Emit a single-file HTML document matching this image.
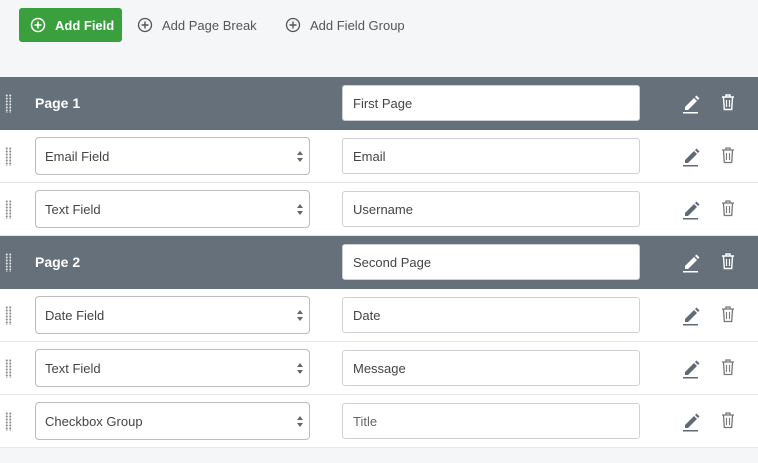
<!DOCTYPE html>
<html><head><style>
*{box-sizing:border-box;margin:0;padding:0}
body{width:758px;height:463px;background:#f5f6f8;font-family:"Liberation Sans",sans-serif;font-size:13px;color:#333;position:relative;overflow:hidden}
.btn{position:absolute;top:8px;height:34px;display:flex;align-items:center;font-size:13px;color:#555}
.green{left:19px;width:103px;background:#3a9f3d;border-radius:3px;color:#fff;font-weight:bold;padding-left:11px}
.btn svg{margin-right:9px}
.row{position:absolute;left:0;width:758px;height:53px;background:#fff;border-bottom:1px solid #e4e6e9}
.row.pg{background:#65707b;border-bottom:none}
.drag{position:absolute;left:5px;top:17px;width:7px;height:19px;background-image:radial-gradient(circle,#888 0.9px,transparent 1.1px);background-size:3.5px 3px}
.pg .drag{background-image:radial-gradient(circle,#dfe3e6 0.9px,transparent 1.1px)}
.title{position:absolute;left:35px;top:18px;color:#fff;font-weight:bold;font-size:14px}
.sel{position:absolute;left:35px;top:7px;width:275px;height:38px;border:1px solid #b9bdc2;border-radius:4px;padding:11px 9px;color:#444}
.sel:after{content:"";position:absolute;right:6px;top:13px;border:3px solid transparent;border-bottom:4px solid #666;border-top:0}
.sel:before{content:"";position:absolute;right:6px;top:20px;border:3px solid transparent;border-top:4px solid #666;border-bottom:0}
.inp{position:absolute;left:342px;top:8px;width:298px;height:36px;border:1px solid #cdd1d5;border-radius:3px;background:#fff;padding:10px 10px;color:#444}
.ic{position:absolute;left:681px;top:15px}
.tr{position:absolute;left:721px;top:17px}
</style></head><body>
<div class="btn green"><svg width="16" height="16" viewBox="0 0 16 16"><circle cx="8" cy="8" r="6.5" fill="none" stroke="#fff" stroke-width="1.5"/><path d="M8 4.5v7M4.5 8h7" stroke="#fff" stroke-width="1.6"/></svg>Add Field</div>
<div class="btn" style="left:137px"><svg width="16" height="16" viewBox="0 0 16 16"><circle cx="8" cy="8" r="6.5" fill="none" stroke="#555" stroke-width="1.3"/><path d="M8 4.5v7M4.5 8h7" stroke="#555" stroke-width="1.4"/></svg>Add Page Break</div>
<div class="btn" style="left:285px"><svg width="16" height="16" viewBox="0 0 16 16"><circle cx="8" cy="8" r="6.5" fill="none" stroke="#555" stroke-width="1.3"/><path d="M8 4.5v7M4.5 8h7" stroke="#555" stroke-width="1.4"/></svg>Add Field Group</div>

<div class="row pg" style="top:77px"><div class="drag"></div><div class="title">Page 1</div><div class="inp">First Page</div>
<svg class="ic" width="20" height="22" viewBox="0 0 20 22"><path d="M4 15l9-9 3 3-9 9H4z" fill="#fff"/><path d="M14 5l1.5-1.5 3 3L17 8z" fill="#fff"/><rect x="2" y="20" width="15" height="1.5" fill="#fff"/></svg>
<svg class="tr" width="14" height="17" viewBox="0 0 14 17"><path d="M1 3h12M5 3V1h4v2M2.5 3.5l.8 12h7.4l.8-12" fill="none" stroke="#fff" stroke-width="1.4"/><path d="M5.5 6v7M8.5 6v7" stroke="#fff" stroke-width="1.2"/></svg></div>

<div class="row" style="top:130px"><div class="drag"></div><div class="sel">Email Field</div><div class="inp">Email</div>
<svg class="ic" width="20" height="22" viewBox="0 0 20 22"><path d="M4 15l9-9 3 3-9 9H4z" fill="#5f6a75"/><path d="M14 5l1.5-1.5 3 3L17 8z" fill="#5f6a75"/><rect x="2" y="20" width="15" height="1.5" fill="#5f6a75"/></svg>
<svg class="tr" width="14" height="17" viewBox="0 0 14 17"><path d="M1 3h12M5 3V1h4v2M2.5 3.5l.8 12h7.4l.8-12" fill="none" stroke="#777" stroke-width="1.3"/><path d="M5.5 6v7M8.5 6v7" stroke="#777" stroke-width="1.1"/></svg></div>

<div class="row" style="top:183px"><div class="drag"></div><div class="sel">Text Field</div><div class="inp">Username</div>
<svg class="ic" width="20" height="22" viewBox="0 0 20 22"><path d="M4 15l9-9 3 3-9 9H4z" fill="#5f6a75"/><path d="M14 5l1.5-1.5 3 3L17 8z" fill="#5f6a75"/><rect x="2" y="20" width="15" height="1.5" fill="#5f6a75"/></svg>
<svg class="tr" width="14" height="17" viewBox="0 0 14 17"><path d="M1 3h12M5 3V1h4v2M2.5 3.5l.8 12h7.4l.8-12" fill="none" stroke="#777" stroke-width="1.3"/><path d="M5.5 6v7M8.5 6v7" stroke="#777" stroke-width="1.1"/></svg></div>

<div class="row pg" style="top:236px"><div class="drag"></div><div class="title">Page 2</div><div class="inp">Second Page</div>
<svg class="ic" width="20" height="22" viewBox="0 0 20 22"><path d="M4 15l9-9 3 3-9 9H4z" fill="#fff"/><path d="M14 5l1.5-1.5 3 3L17 8z" fill="#fff"/><rect x="2" y="20" width="15" height="1.5" fill="#fff"/></svg>
<svg class="tr" width="14" height="17" viewBox="0 0 14 17"><path d="M1 3h12M5 3V1h4v2M2.5 3.5l.8 12h7.4l.8-12" fill="none" stroke="#fff" stroke-width="1.4"/><path d="M5.5 6v7M8.5 6v7" stroke="#fff" stroke-width="1.2"/></svg></div>

<div class="row" style="top:289px"><div class="drag"></div><div class="sel">Date Field</div><div class="inp">Date</div>
<svg class="ic" width="20" height="22" viewBox="0 0 20 22"><path d="M4 15l9-9 3 3-9 9H4z" fill="#5f6a75"/><path d="M14 5l1.5-1.5 3 3L17 8z" fill="#5f6a75"/><rect x="2" y="20" width="15" height="1.5" fill="#5f6a75"/></svg>
<svg class="tr" width="14" height="17" viewBox="0 0 14 17"><path d="M1 3h12M5 3V1h4v2M2.5 3.5l.8 12h7.4l.8-12" fill="none" stroke="#777" stroke-width="1.3"/><path d="M5.5 6v7M8.5 6v7" stroke="#777" stroke-width="1.1"/></svg></div>

<div class="row" style="top:342px"><div class="drag"></div><div class="sel">Text Field</div><div class="inp">Message</div>
<svg class="ic" width="20" height="22" viewBox="0 0 20 22"><path d="M4 15l9-9 3 3-9 9H4z" fill="#5f6a75"/><path d="M14 5l1.5-1.5 3 3L17 8z" fill="#5f6a75"/><rect x="2" y="20" width="15" height="1.5" fill="#5f6a75"/></svg>
<svg class="tr" width="14" height="17" viewBox="0 0 14 17"><path d="M1 3h12M5 3V1h4v2M2.5 3.5l.8 12h7.4l.8-12" fill="none" stroke="#777" stroke-width="1.3"/><path d="M5.5 6v7M8.5 6v7" stroke="#777" stroke-width="1.1"/></svg></div>

<div class="row" style="top:395px"><div class="drag"></div><div class="sel">Checkbox Group</div><div class="inp" style="color:#666">Title</div>
<svg class="ic" width="20" height="22" viewBox="0 0 20 22"><path d="M4 15l9-9 3 3-9 9H4z" fill="#5f6a75"/><path d="M14 5l1.5-1.5 3 3L17 8z" fill="#5f6a75"/><rect x="2" y="20" width="15" height="1.5" fill="#5f6a75"/></svg>
<svg class="tr" width="14" height="17" viewBox="0 0 14 17"><path d="M1 3h12M5 3V1h4v2M2.5 3.5l.8 12h7.4l.8-12" fill="none" stroke="#777" stroke-width="1.3"/><path d="M5.5 6v7M8.5 6v7" stroke="#777" stroke-width="1.1"/></svg></div>
</body></html>
